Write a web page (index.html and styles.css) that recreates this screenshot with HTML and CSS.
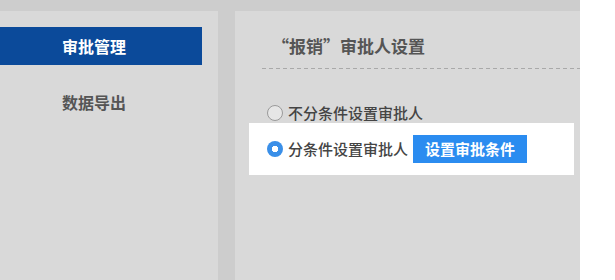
FILE: index.html
```html
<!DOCTYPE html>
<html lang="zh-CN">
<head>
<meta charset="utf-8">
<title>审批人设置</title>
<link rel="stylesheet" href="styles.css">
</head>
<body>
<div class="page">
  <aside class="sidebar">
    <div class="nav-item active">审批管理</div>
    <div class="nav-item">数据导出</div>
  </aside>
  <main class="main">
    <div class="header">
      <h2 class="title">“报销”审批人设置</h2>
    </div>
    <div class="dash"></div>
    <div class="options">
      <label class="option">
        <span class="radio"></span>
        <span class="label">不分条件设置审批人</span>
      </label>
      <label class="option selected">
        <span class="radio checked"></span>
        <span class="label">分条件设置审批人</span>
        <span class="btn">设置审批条件</span>
      </label>
    </div>
  </main>
</div>
</body>
</html>
```

FILE: styles.css
```css
html, body {
  margin: 0;
  padding: 0;
  background: #ffffff;
  font-family: "Noto Sans CJK SC", "Microsoft YaHei", sans-serif;
}

.page {
  width: 580px;
  height: 280px;
  box-sizing: border-box;
  padding-top: 11px;
  background: #cdcdcd;
  display: flex;
  gap: 17px;
}

.sidebar {
  width: 218px;
  background: #d9d9d9;
  padding-top: 16px;
}

.nav-item {
  width: 202px;
  height: 38px;
  box-sizing: border-box;
  padding-left: 62px;
  line-height: 38px;
  font-size: 16px;
  font-weight: bold;
  color: #555555;
  margin-bottom: 18px;
}

.nav-item.active {
  background: #0b4a9a;
  color: #ffffff;
}

.main {
  flex: 1;
  background: #d9d9d9;
}

.header {
  margin-left: 27px;
  padding: 24px 0 11px 10px;
}

.title {
  margin: 0;
  font-size: 17px;
  line-height: 22px;
  font-weight: bold;
  color: #555555;
}

.dash {
  margin-left: 27px;
  height: 1px;
  background: repeating-linear-gradient(to right, #a9a9a9 0 4px, transparent 4px 7px);
}

.options {
  margin: 34px 0 0 14px;
  width: 325px;
}

.option {
  display: flex;
  align-items: center;
  padding-left: 18px;
  height: 20px;
  font-size: 15px;
  font-weight: 500;
  color: #444444;
}

.option.selected {
  height: 52px;
  background: #ffffff;
}

.radio {
  width: 14px;
  height: 14px;
  border: 1px solid #9a9a9a;
  border-radius: 50%;
  background: #e6e6e6;
  margin-right: 5px;
  flex: none;
}

.radio.checked {
  width: 16px;
  height: 16px;
  border: none;
  background: radial-gradient(circle, #ffffff 0 3px, #3a8fe8 3.5px);
}

.label {
  line-height: 20px;
}

.btn {
  margin-left: 5px;
  width: 114px;
  height: 28px;
  line-height: 28px;
  text-align: center;
  background: #2b8cf0;
  color: #ffffff;
  font-weight: bold;
  font-size: 15px;
}
```
